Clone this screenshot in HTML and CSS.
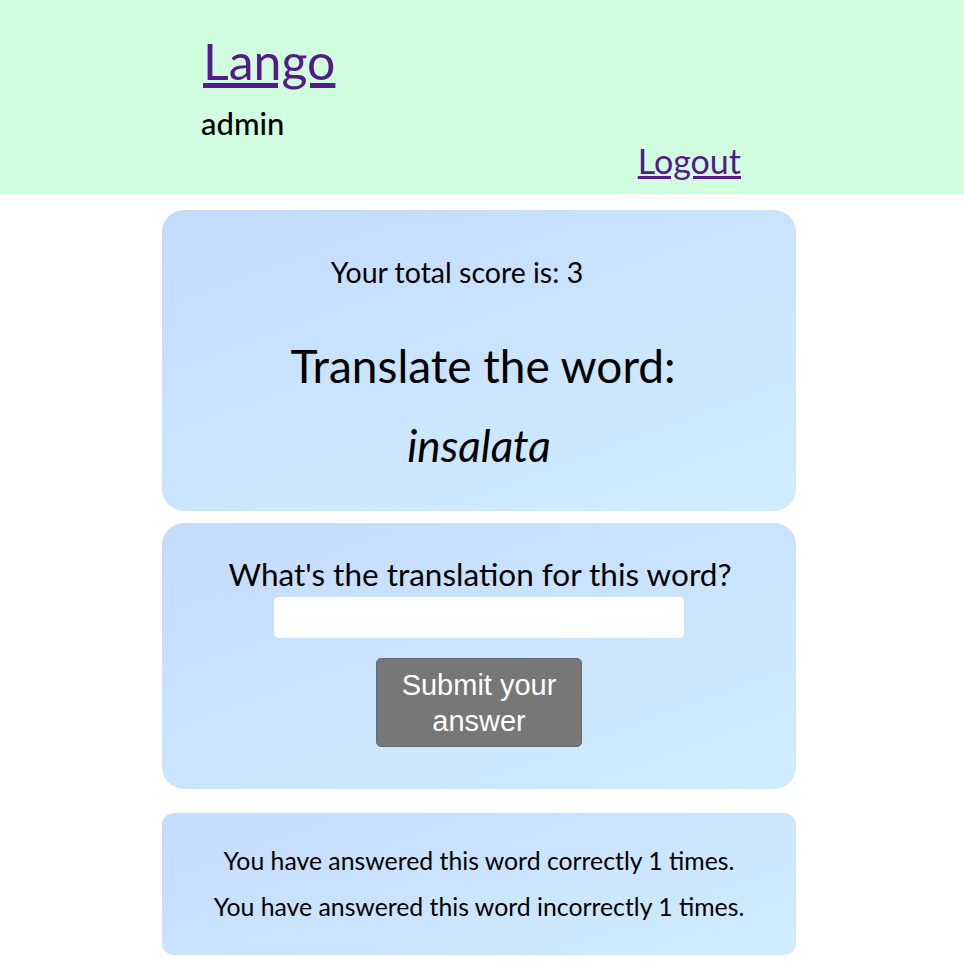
FILE: index.html
```html
<!DOCTYPE html>
<html lang="en">
<head>
<meta charset="utf-8">
<title>Lango</title>
<link rel="stylesheet" href="styles.css">
</head>
<body>
<header class="site-header">
  <div class="header-inner">
    <h1 class="brand"><a href="#" class="brand-link">Lango</a></h1>
    <div class="user-name">admin</div>
    <div class="logout-row"><a href="#" class="logout-link">Logout</a></div>
  </div>
</header>
<main class="main">
  <section class="card card-word">
    <p class="score">Your total score is: 3</p>
    <h2 class="prompt">Translate the word:</h2>
    <p class="word">insalata</p>
  </section>
  <section class="card card-form">
    <form class="answer-form">
      <label class="question" for="answer">What's the translation for this word?</label>
      <input class="answer-input" id="answer" type="text">
      <button class="submit-btn" type="submit">Submit your answer</button>
    </form>
  </section>
  <section class="card card-stats">
    <p class="stat">You have answered this word correctly 1 times.</p>
    <p class="stat">You have answered this word incorrectly 1 times.</p>
  </section>
</main>
</body>
</html>
```
FILE: styles.css
```css
* { box-sizing: border-box; }
body {
  margin: 0;
  font-family: Lato, "Open Sans", sans-serif;
  color: #000;
  background: #fff;
}
.site-header {
  background: #d1fede;
  height: 194px;
}
.header-inner {
  width: 540px;
  margin-left: 201px;
  padding-top: 32px;
}
.brand {
  margin: 0 0 0 2px;
  font-size: 50px;
  font-weight: 400;
  line-height: 58px;
}
.brand-link, .logout-link { color: #551a8b; }
.user-name {
  font-size: 31px;
  line-height: 36px;
  margin-top: 15px;
  font-weight: 500;
}
.logout-row {
  display: flex;
  justify-content: flex-end;
  margin-top: 0;
}
.logout-link {
  font-size: 34px;
  line-height: 40px;
}
.main {
  padding: 16px 0 10px 162px;
  display: flex;
  flex-direction: column;
}
.card {
  width: 634px;
  border-radius: 22px;
  background: linear-gradient(160deg, #c4dbfc 0%, #d0edff 100%);
  text-align: center;
}
.card-word {
  height: 301px;
  padding-top: 44px;
}
.score {
  margin: 0 44px 0 0;
  font-size: 28.5px;
  line-height: 36px;
  font-weight: 400;
}
.prompt {
  margin: 48px 0 0 8px;
  font-size: 46px;
  font-weight: 400;
  line-height: 56px;
}
.word {
  margin: 25px 0 0;
  font-size: 44px;
  font-style: italic;
  line-height: 52px;
  font-weight: 400;
}
.card-form {
  margin-top: 12px;
  height: 266px;
  padding-top: 32px;
}
.answer-form {
  display: flex;
  flex-direction: column;
  align-items: center;
}
.question {
  font-size: 31.5px;
  line-height: 38px;
  margin-left: 2px;
}
.answer-input {
  width: 410px;
  height: 41px;
  border: none;
  border-radius: 5px;
  background: #fff;
  margin-top: 4px;
}
.submit-btn {
  margin-top: 20px;
  width: 206px;
  height: 89px;
  background: #777;
  color: #fff;
  border: 1px solid #6a6a6a;
  border-radius: 5px;
  font-family: "Liberation Sans", Arial, sans-serif;
  font-size: 29px;
  line-height: 36px;
  padding: 6px 10px;
}
.card-stats {
  margin-top: 24px;
  height: 142px;
  border-radius: 12px;
  padding-top: 33px;
}
.stat {
  margin: 0;
  font-size: 24.8px;
  line-height: 30px;
}
.stat + .stat { margin-top: 16px; }
```
